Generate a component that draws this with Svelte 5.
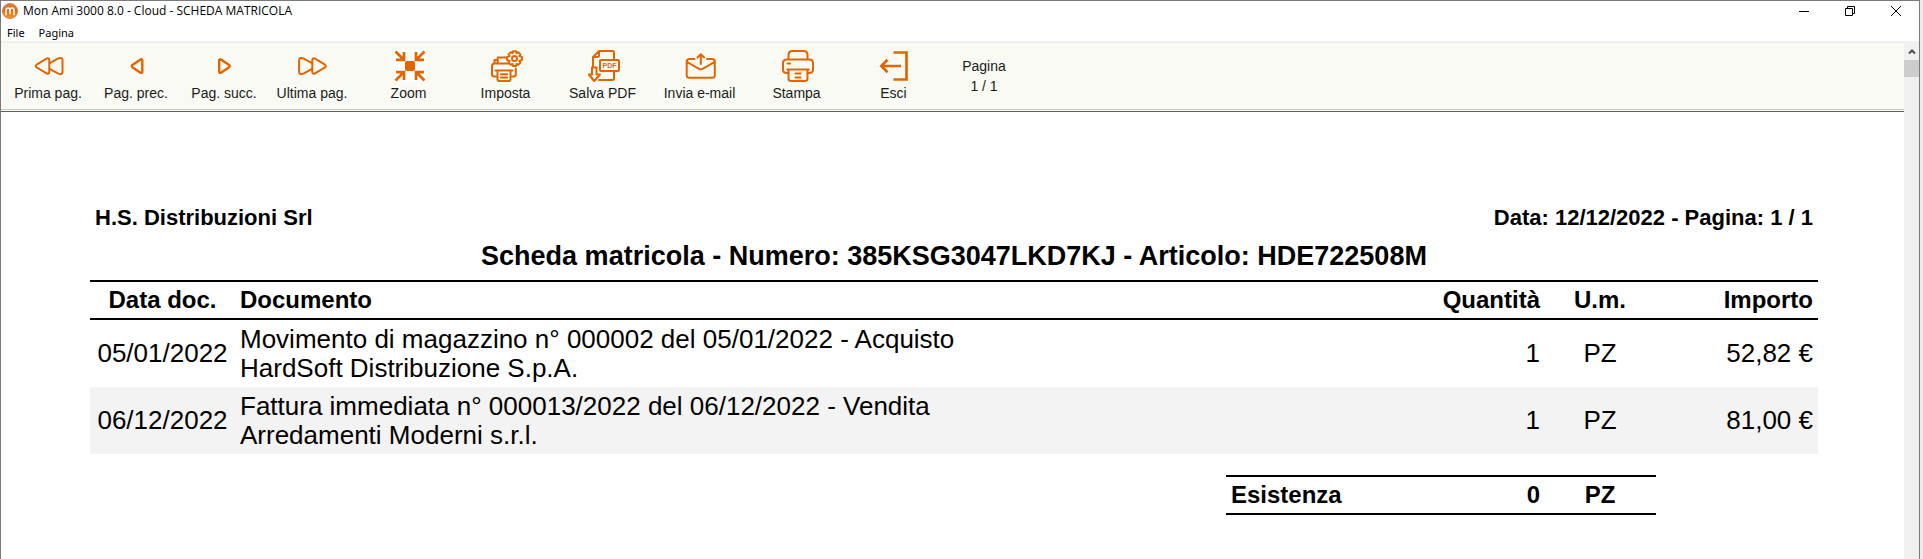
<script>
  const pageButtons = [
    { id: 'first', label: 'Prima pag.' },
    { id: 'prev', label: 'Pag. prec.' },
    { id: 'next', label: 'Pag. succ.' },
    { id: 'last', label: 'Ultima pag.' }
  ];
  const actionButtons = [
    { id: 'zoom', label: 'Zoom' },
    { id: 'setup', label: 'Imposta' },
    { id: 'pdf', label: 'Salva PDF' },
    { id: 'mail', label: 'Invia e-mail' },
    { id: 'print', label: 'Stampa' },
    { id: 'exit', label: 'Esci' }
  ];
  const rows = [
    {
      date: '05/01/2022',
      doc: 'Movimento di magazzino n° 000002 del 05/01/2022 - Acquisto',
      party: 'HardSoft Distribuzione S.p.A.',
      qty: '1',
      unit: 'PZ',
      amount: '52,82 €'
    },
    {
      date: '06/12/2022',
      doc: 'Fattura immediata n° 000013/2022 del 06/12/2022 - Vendita',
      party: 'Arredamenti Moderni s.r.l.',
      qty: '1',
      unit: 'PZ',
      amount: '81,00 €'
    }
  ];
</script>

{#snippet icon(id)}
  <svg class="icon" viewBox="0 0 32 32" aria-hidden="true">
    {#if id === 'first'}
      <path d="M14.600 8.700L5 14.300c-1.600 1-1.600 2.400 0 3.400l9.600 5.600c1.400.8 2.700.2 2.700-1.400V10.100c0-1.600-1.300-2.200-2.700-1.400z" />
      <path d="M17.600 13.200l8.200-4.600c2.700-1.200 4.700-.9 4.700 1.500v11.800c0 2.400-2 2.700-4.700 1.500l-8.200-4.600" />
    {:else if id === 'prev'}
      <path class="strong" d="M20.200 9.700l-7.500 5c-1.200.9-1.200 1.900 0 2.700l7.500 5.100c1.200.8 2.100.4 2.100-.9V10.600c0-1.300-.9-1.700-2.100-.9z" />
    {:else if id === 'next'}
      <path class="strong" d="M13.300 9.700l7.500 5c1.200.9 1.200 1.900 0 2.700l-7.500 5.100c-1.200.8-2.100.4-2.100-.9V10.600c0-1.300.9-1.700 2.100-.9z" />
    {:else if id === 'last'}
      <path d="M19 8.700l9.600 5.600c1.600 1 1.600 2.400 0 3.400L19 23.300c-1.400.8-2.700.2-2.700-1.400V10.100c0-1.600 1.300-2.200 2.700-1.400z" />
      <path d="M16 13.200L7.800 8.600c-2.700-1.200-4.700-.9-4.700 1.500v11.800c0 2.400 2 2.700 4.700 1.500l8.200-4.600" />
    {:else if id === 'zoom'}
      <rect class="backing" width="32" height="32" />
      <rect class="solid" x="11" y="11" width="10" height="10" rx="2" />
      <path class="bold" d="M1.500 1.500l8 8M2 9.800h8V2M30.500 1.500l-8 8M30 9.800h-8V2M1.500 30.500l8-8M2 22.200h8V30M30.500 30.500l-8-8M30 22.200h-8V30" />
    {:else if id === 'setup'}
      <path d="M3.500 13.500V10h3.200M6.700 13.500V7.500h8.500M5.500 26.500H3.200c-1.300 0-2.200-.8-2.200-2V16c0-1.400 1-2.500 2.400-2.500h14M24.800 18.500v6c0 1.200-.8 2-2 2H20.500" />
      <path d="M4.500 20.500h17M6.500 20.500v8.800c0 1.200.7 1.800 1.800 1.800h9.400c1.100 0 1.800-.6 1.800-1.800v-8.800M10 24.200h6.200M10 27.500h6.200" />
      <circle cx="23.500" cy="8.500" r="2.500" />
      <path d="M22 1.200h3l.5 2 1.700-1 2.200 2.200-1 1.700 2.500.8v3.200l-2.500.8 1 1.700-2.200 2.300-1.700-1-.5 2.100h-3l-.5-2.100-1.700 1-2.200-2.300 1-1.700-2.500-.8V6.900l2.500-.8-1-1.700 2.200-2.200 1.700 1z" />
    {:else if id === 'pdf'}
      <path d="M26 9V2.500C26 1.500 25.500 1 24.500 1H11L5 7v10M5 7h4.500c1 0 1.500-.5 1.500-1.500V1M11 30h13.500c1 0 1.500-.5 1.500-1.500V22" />
      <rect x="12" y="10" width="19" height="11" rx="1" />
      <path d="M4 17.500h4.500v7H12L6.200 31 .9 24.500H4z" />
      <text x="14.500" y="18">PDF</text>
    {:else if id === 'mail'}
      <path d="M9.500 9H4.700C3 9 1.700 10 1.700 11.700v13.600c0 1.500 1 2.500 2.500 2.500h23.100c1.500 0 2.500-1 2.500-2.500V11.700c0-1.700-1.300-2.700-3-2.700H22M2 12l11.600 6.700c1.500.9 2.900.9 4.400 0L29.500 12" />
      <path d="M15.800 14V4.500M12.500 7.500l3.300-3.300L19.100 7.500" />
    {:else if id === 'print'}
      <path d="M6.500 9.500V5c0-2.400 1.600-4 4-4h11c2.400 0 4 1.600 4 4v4.500M6.500 23H4.800C2.500 23 1 21.700 1 19.500V13c0-2.200 1.500-3.500 3.800-3.500h22.400C29.500 9.500 31 10.800 31 13v6.500c0 2.200-1.500 3.500-3.800 3.500h-1.700" />
      <path d="M5.200 19.500h21.600M6.500 19.500v9c0 1.700.9 2.500 2.500 2.500h14c1.600 0 2.500-.8 2.500-2.500v-9M5.500 13.500h2.500M13.500 23.500h5M13.500 27.500h5" />
    {:else if id === 'exit'}
      <path class="bold" d="M14.500 2.500H27.500v27H14.500M22 16H2M8.500 9.800L2.300 16l6.200 6.200" />
    {/if}
  </svg>
{/snippet}

<div class="window">
  <header class="titlebar">
    <svg class="logo" viewBox="0 0 16 16" aria-hidden="true">
      <defs>
        <linearGradient id="ball" x1="0" y1="0" x2="0" y2="1">
          <stop offset="0" stop-color="#d88040" />
          <stop offset="0.45" stop-color="#e06a14" />
          <stop offset="1" stop-color="#f59a28" />
        </linearGradient>
      </defs>
      <circle cx="8" cy="8" r="7.600" fill="url(#ball)" stroke="#c4672c" stroke-width="0.600" />
      <path d="M4 11.500V7.500c0-1.700.8-2.500 2-2.500s2 .8 2 2.500v3M8 7.500C8 5.800 8.800 5 10 5s2 .8 2 2.500v4" fill="none" stroke="#fff3df" stroke-width="1.700" stroke-linecap="round" />
    </svg>
    <h1>Mon Ami 3000 8.0 - Cloud - SCHEDA MATRICOLA</h1>
    <div class="controls">
      <button type="button" aria-label="Riduci a icona">
        <svg viewBox="0 0 12 12"><path d="M1 6.500h10" /></svg>
      </button>
      <button type="button" aria-label="Ripristina">
        <svg viewBox="0 0 12 12"><path d="M1.500 3.500h7v7h-7zM3.500 3.500v-2h7v7h-2" /></svg>
      </button>
      <button type="button" aria-label="Chiudi">
        <svg viewBox="0 0 12 12"><path d="M1 1l10 10M11 1L1 11" /></svg>
      </button>
    </div>
  </header>

  <nav class="menu">
    <button type="button">File</button>
    <button type="button">Pagina</button>
  </nav>

  <div class="body">
    <div class="view">
      <div class="toolbar">
        <div class="group pages">
          {#each pageButtons as b}
            <button type="button">{@render icon(b.id)}<span>{b.label}</span></button>
          {/each}
        </div>
        <div class="group actions">
          {#each actionButtons as b}
            <button type="button">{@render icon(b.id)}<span>{b.label}</span></button>
          {/each}
        </div>
        <div class="counter"><span>Pagina</span><span>1 / 1</span></div>
      </div>

      <main class="report">
        <div class="heading">
          <span>H.S. Distribuzioni Srl</span>
          <span>Data: 12/12/2022 - Pagina: 1 / 1</span>
        </div>
        <h2>Scheda matricola - Numero: 385KSG3047LKD7KJ - Articolo: HDE722508M</h2>
        <table>
          <thead>
            <tr>
              <th class="date">Data doc.</th>
              <th class="doc">Documento</th>
              <th class="qty">Quantità</th>
              <th class="unit">U.m.</th>
              <th class="amount">Importo</th>
            </tr>
          </thead>
          <tbody>
            {#each rows as r}
              <tr>
                <td class="date">{r.date}</td>
                <td class="doc">{r.doc}<br />{r.party}</td>
                <td class="qty">{r.qty}</td>
                <td class="unit">{r.unit}</td>
                <td class="amount">{r.amount}</td>
              </tr>
            {/each}
          </tbody>
        </table>
        <dl class="total">
          <dt>Esistenza</dt>
          <dd class="qty">0</dd>
          <dd class="unit">PZ</dd>
        </dl>
      </main>
    </div>

    <div class="scrollbar">
      <button type="button" aria-label="Scorri su">
        <svg viewBox="0 0 8 6"><path d="M1 4.500L4 1.500l3 3" /></svg>
      </button>
      <div class="thumb"></div>
    </div>
  </div>
</div>

<style>
  :global(body) {
    margin: 0;
    background: #ececec;
  }

  .window {
    box-sizing: border-box;
    display: flex;
    flex-direction: column;
    min-height: 100vh;
    margin-right: 3px;
    border: 1px solid #7a7a7a;
    border-bottom: 0;
    background: #fff;
    color: #000;
    font-family: 'Liberation Sans', Arial, sans-serif;
  }

  button {
    margin: 0;
    padding: 0;
    border: 0;
    background: none;
    color: inherit;
    font: inherit;
  }

  .titlebar {
    display: flex;
    align-items: center;
    height: 20px;
    padding-left: 1px;
    font-family: 'Open Sans', 'Noto Sans', sans-serif;
  }

  .logo {
    width: 16px;
    height: 16px;
  }

  h1 {
    flex: 1;
    margin: 0 0 0 5px;
    font-size: 12px;
    font-weight: 400;
    line-height: 20px;
  }

  .controls {
    display: flex;
  }

  .controls button {
    display: flex;
    align-items: center;
    justify-content: center;
    width: 46px;
    height: 18px;
  }

  .controls svg {
    width: 12px;
    height: 12px;
    fill: none;
    stroke: #000;
    stroke-width: 1;
  }

  .menu {
    display: flex;
    gap: 14px;
    height: 20px;
    padding-left: 6px;
    border-bottom: 2px solid #f0f0f0;
    font: 11px/24px 'Noto Sans', 'Open Sans', sans-serif;
  }

  .body {
    display: flex;
    flex: 1;
  }

  .view {
    flex: 1;
    min-width: 0;
  }

  .toolbar {
    display: flex;
    gap: 4px;
    height: 66px;
    padding-left: 3px;
    border-bottom: 1px solid #c9ccc4;
    background: #f9faf4;
    color: #1a1a1a;
    font-size: 14px;
    line-height: 20px;
    box-shadow: 0 1px #f9faf4, 0 2px #5f615b;
  }

  .group {
    display: flex;
  }

  .group button {
    display: flex;
    flex-direction: column;
    align-items: center;
    padding-top: 7px;
    white-space: nowrap;
  }

  .group span {
    padding-top: 1px;
  }

  .pages button {
    width: 88px;
  }

  .actions button {
    width: 97px;
  }

  .counter {
    display: flex;
    flex-direction: column;
    align-items: center;
    width: 76px;
    padding-top: 13px;
  }

  .icon {
    width: 32px;
    height: 32px;
    fill: none;
    stroke: #e36500;
    stroke-width: 2;
    stroke-linejoin: round;
    stroke-linecap: round;
  }

  .actions .icon {
    margin-left: 3px;
  }

  .icon .strong {
    stroke-width: 2.4;
  }

  .icon .bold {
    stroke-width: 2.7;
    stroke-linecap: butt;
    stroke-linejoin: miter;
  }

  .icon .backing {
    fill: #fff;
    stroke: none;
  }

  .icon .solid {
    fill: #e36500;
    stroke: none;
  }

  .icon text {
    fill: #e36500;
    stroke: none;
    font: 700 7px 'Liberation Sans', sans-serif;
  }

  .report {
    padding: 92px 86px 24px 89px;
  }

  .heading {
    display: flex;
    justify-content: space-between;
    padding: 0 5px;
    font-size: 22px;
    font-weight: 700;
    line-height: 32px;
  }

  h2 {
    margin: 0;
    padding: 8px 0 10px;
    font-size: 27px;
    font-weight: 700;
    line-height: 28px;
    text-align: center;
  }

  table {
    width: 100%;
    border-collapse: separate;
    border-spacing: 0;
    table-layout: fixed;
    font-size: 26px;
    line-height: 29px;
  }

  th {
    height: 36px;
    padding: 0;
    border-top: 2px solid #000;
    border-bottom: 2px solid #000;
    font-size: 24px;
    line-height: 32px;
  }

  td {
    height: 67px;
    padding: 0;
  }

  tbody tr:nth-child(even) {
    background: #f3f3f3;
  }

  .date {
    width: 145px;
    text-align: center;
  }

  table .doc {
    padding-left: 5px;
    text-align: left;
  }

  .qty {
    width: 160px;
    text-align: right;
  }

  table .qty {
    padding-right: 4px;
  }

  .unit {
    width: 112px;
    text-align: center;
  }

  table .amount {
    width: 157px;
    padding-right: 5px;
    text-align: right;
  }

  .total {
    display: flex;
    width: 430px;
    margin: 21px 162px 0 auto;
    border-top: 2px solid #000;
    border-bottom: 2px solid #000;
    font-size: 24px;
    font-weight: 700;
    line-height: 36px;
  }

  .total dt {
    flex: 1;
    padding-left: 5px;
  }

  .total dd {
    margin: 0;
  }

  .total .qty {
    padding-right: 4px;
  }

  .scrollbar {
    width: 15px;
    background: #f0f0f0;
  }

  .scrollbar button {
    display: flex;
    align-items: center;
    justify-content: center;
    width: 15px;
    height: 17px;
  }

  .scrollbar svg {
    width: 8px;
    height: 6px;
    fill: none;
    stroke: #505050;
    stroke-width: 2;
  }

  .thumb {
    height: 17px;
    background: #cdcdcd;
  }
</style>
